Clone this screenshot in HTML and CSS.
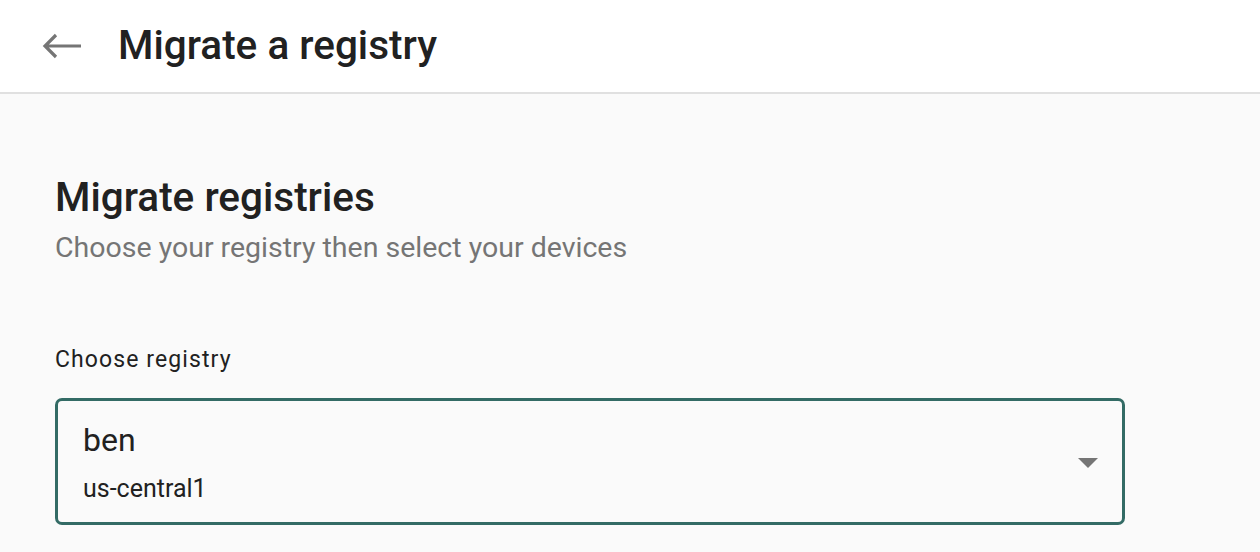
FILE: index.html
```html
<!DOCTYPE html>
<html lang="en">
<head>
    <meta charset="UTF-8">
    <title>Migrate a registry</title>
    <link rel="stylesheet" href="styles.css">
</head>
<body>
    <header class="topbar">
        <button class="back-btn" aria-label="Back">
            <svg width="42" height="28" viewBox="0 0 42 28">
                <path d="M40 14H4M15 3L4 14l11 11" fill="none" stroke="#757575" stroke-width="3.2"/>
            </svg>
        </button>
        <h1 class="page-title">Migrate a registry</h1>
    </header>

    <main class="content">
        <h2 class="section-title">Migrate registries</h2>
        <p class="section-sub">Choose your registry then select your devices</p>

        <label class="field-label">Choose registry</label>
        <div class="select-box">
            <div class="select-value">
                <div class="select-name">ben</div>
                <div class="select-region">us-central1</div>
            </div>
            <span class="select-caret"></span>
        </div>
    </main>
</body>
</html>
```

FILE: styles.css
```css
body {
    margin: 0;
    padding: 0;
    font-family: 'Roboto', 'Liberation Sans', sans-serif;
    background-color: #fafafa;
    color: #212121;
}

.topbar {
    height: 94px;
    background-color: #fff;
    border-bottom: 2px solid #e0e0e0;
    display: flex;
    align-items: center;
    padding-left: 41px;
    box-sizing: border-box;
}

.back-btn {
    background: none;
    border: none;
    padding: 0;
    margin-right: 35px;
    display: flex;
    cursor: pointer;
}

.page-title {
    margin: 0;
    font-size: 40.5px;
    font-weight: 500;
    line-height: 48px;
    padding-bottom: 2px;
}

.content {
    padding: 79px 55px 0 55px;
}

.section-title {
    margin: 0;
    font-size: 40.5px;
    font-weight: 500;
    line-height: 48px;
}

.section-sub {
    margin: 9px 0 0 0;
    font-size: 28.5px;
    color: #757575;
    line-height: 36px;
}

.field-label {
    display: block;
    margin-top: 80px;
    font-size: 23px;
    letter-spacing: 1.1px;
    line-height: 28px;
}

.select-box {
    margin-top: 24px;
    width: 1070px;
    height: 127px;
    box-sizing: border-box;
    border: 3px solid #336b65;
    border-radius: 7px;
    display: flex;
    align-items: flex-start;
    padding: 0 24px 0 25px;
}

.select-value {
    flex: 1;
    padding-top: 20px;
}

.select-name {
    font-size: 32px;
    line-height: 38px;
}

.select-region {
    margin-top: 15px;
    font-size: 25px;
    line-height: 30px;
}

.select-caret {
    width: 0;
    height: 0;
    border-left: 10px solid transparent;
    border-right: 10px solid transparent;
    border-top: 10px solid #757575;
    margin-top: 57px;
}
```
